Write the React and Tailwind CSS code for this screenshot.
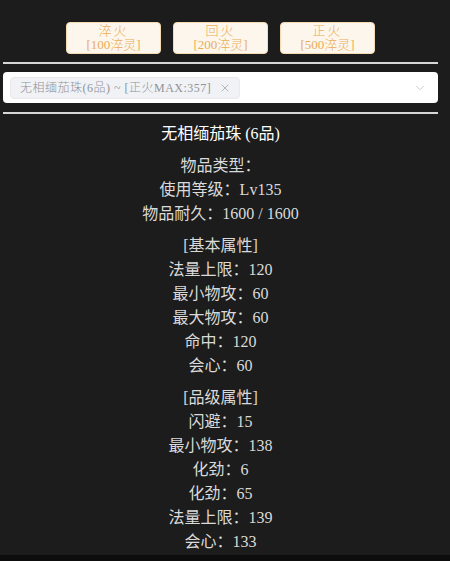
import React from "react";
import { ChevronDown, X } from "lucide-react";

const fontStack = {
  fontFamily: '"Liberation Serif", "Noto Sans CJK SC", serif',
};

const buttons = [
  { name: "淬火", cost: "[100淬灵]" },
  { name: "回火", cost: "[200淬灵]" },
  { name: "正火", cost: "[500淬灵]" },
];

const groups = [
  ["物品类型：", "使用等级：Lv135", "物品耐久：1600 / 1600"],
  ["[基本属性]", "法量上限：120", "最小物攻：60", "最大物攻：60", "命中：120", "会心：60"],
  ["[品级属性]", "闪避：15", "最小物攻：138", "化劲：6", "化劲：65", "法量上限：139", "会心：133"],
];

const App = () => {
  return (
    <div className="min-h-screen w-full bg-[#0d0d0d]" style={fontStack}>
      <div className="bg-[#1c1c1c] pl-[3px] pr-[12px] pt-[22px] pb-px">
        <div className="flex justify-center gap-3">
          {buttons.map((b) => (
            <button
              key={b.name}
              className="w-[95px] h-[32px] rounded-[4px] bg-[#fdf6ec] border border-[#f5dab1] text-[#e9ad5a] text-[13px] leading-[14px] font-light flex flex-col items-center justify-center"
            >
              <span className="tracking-[2px]">{b.name}</span>
              <span>{b.cost}</span>
            </button>
          ))}
        </div>

        <div className="mt-2 h-[2px] bg-[#d6d6d6]" />

        <div className="mt-2 h-[31px] rounded-[4px] bg-white flex items-center justify-between pl-[7px] pr-[11px]">
          <div className="h-[22px] flex items-center gap-[8px] rounded-[4px] bg-[#f0f2f5] border border-[#e9e9eb] pl-[9px] pr-2 text-[12px] text-[#909399] font-light">
            <span className="tracking-[0.5px]">无相缅茄珠(6品) ~ [正火MAX:357]</span>
            <X size={12} strokeWidth={1.5} className="text-[#a0a3a9]" />
          </div>
          <ChevronDown size={14} strokeWidth={1.5} className="text-[#c0c4cc]" />
        </div>

        <div className="mt-[9px] h-[2px] bg-[#d6d6d6]" />

        <div className="mt-2 text-center text-[16px] leading-6">
          <div className="text-white">无相缅茄珠 (6品)</div>
          {groups.map((g, i) => (
            <div key={i} className="mt-2 text-[#dadada]">
              {g.map((line, j) => (
                <div key={j}>{line}</div>
              ))}
            </div>
          ))}
        </div>
      </div>
    </div>
  );
};

export default App;
